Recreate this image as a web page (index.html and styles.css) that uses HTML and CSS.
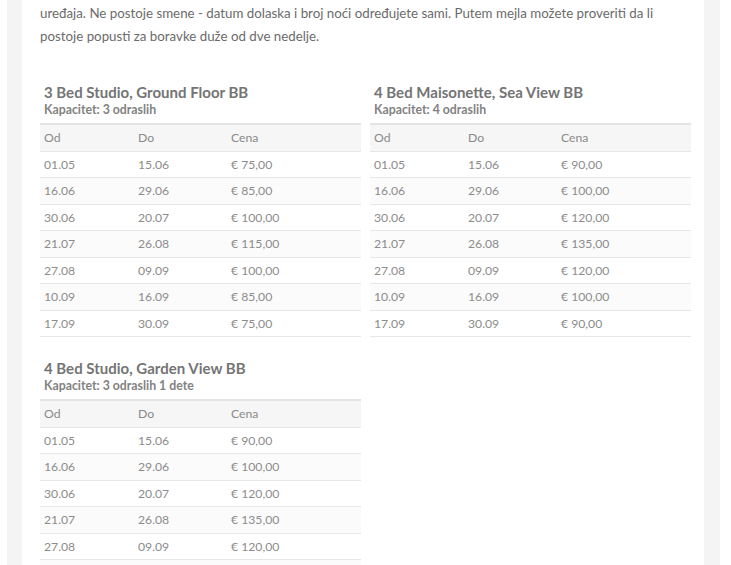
FILE: index.html
```html
<!DOCTYPE html>
<html lang="sr">
<head>
<meta charset="utf-8">
<title>Cenovnik</title>
<link rel="stylesheet" href="styles.css">
</head>
<body>
<div class="site">
  <div class="frame">
    <div class="content">
      <p class="intro">Svi apartmani su klimatizovani i imaju kuhinju opremljenu posuđem i osnovnim setom kuhinjskih<br>uređaja. Ne postoje smene - datum dolaska i broj noći određujete sami. Putem mejla možete proveriti da li postoje popusti za boravke duže od dve nedelje.</p>

      <div class="grid">
        <section class="unit">
          <h3 class="unit-title">3 Bed Studio, Ground Floor BB</h3>
          <p class="unit-cap">Kapacitet: 3 odraslih</p>
          <table class="prices">
            <thead><tr><th>Od</th><th>Do</th><th>Cena</th></tr></thead>
            <tbody>
              <tr><td>01.05</td><td>15.06</td><td>€ 75,00</td></tr>
              <tr><td>16.06</td><td>29.06</td><td>€ 85,00</td></tr>
              <tr><td>30.06</td><td>20.07</td><td>€ 100,00</td></tr>
              <tr><td>21.07</td><td>26.08</td><td>€ 115,00</td></tr>
              <tr><td>27.08</td><td>09.09</td><td>€ 100,00</td></tr>
              <tr><td>10.09</td><td>16.09</td><td>€ 85,00</td></tr>
              <tr><td>17.09</td><td>30.09</td><td>€ 75,00</td></tr>
            </tbody>
          </table>
        </section>

        <section class="unit">
          <h3 class="unit-title">4 Bed Maisonette, Sea View BB</h3>
          <p class="unit-cap">Kapacitet: 4 odraslih</p>
          <table class="prices">
            <thead><tr><th>Od</th><th>Do</th><th>Cena</th></tr></thead>
            <tbody>
              <tr><td>01.05</td><td>15.06</td><td>€ 90,00</td></tr>
              <tr><td>16.06</td><td>29.06</td><td>€ 100,00</td></tr>
              <tr><td>30.06</td><td>20.07</td><td>€ 120,00</td></tr>
              <tr><td>21.07</td><td>26.08</td><td>€ 135,00</td></tr>
              <tr><td>27.08</td><td>09.09</td><td>€ 120,00</td></tr>
              <tr><td>10.09</td><td>16.09</td><td>€ 100,00</td></tr>
              <tr><td>17.09</td><td>30.09</td><td>€ 90,00</td></tr>
            </tbody>
          </table>
        </section>

        <section class="unit">
          <h3 class="unit-title">4 Bed Studio, Garden View BB</h3>
          <p class="unit-cap">Kapacitet: 3 odraslih 1 dete</p>
          <table class="prices">
            <thead><tr><th>Od</th><th>Do</th><th>Cena</th></tr></thead>
            <tbody>
              <tr><td>01.05</td><td>15.06</td><td>€ 90,00</td></tr>
              <tr><td>16.06</td><td>29.06</td><td>€ 100,00</td></tr>
              <tr><td>30.06</td><td>20.07</td><td>€ 120,00</td></tr>
              <tr><td>21.07</td><td>26.08</td><td>€ 135,00</td></tr>
              <tr><td>27.08</td><td>09.09</td><td>€ 120,00</td></tr>
              <tr><td>10.09</td><td>16.09</td><td>€ 100,00</td></tr>
              <tr><td>17.09</td><td>30.09</td><td>€ 90,00</td></tr>
            </tbody>
          </table>
        </section>
      </div>
    </div>
  </div>
</div>
</body>
</html>
```

FILE: styles.css
```css
html, body {
  margin: 0;
  padding: 0;
  background: #ffffff;
  font-family: Lato, "Open Sans", "Liberation Sans", sans-serif;
  color: #6a6a6a;
  overflow: hidden;
}

.site {
  padding: 0 11px 0 7px;
}

.frame {
  border-left: 15px solid #f4f4f4;
  border-right: 16px solid #f4f4f4;
  min-height: 600px;
}

.content {
  padding: 0 0 0 18px;
  margin-top: -21px;
}

.intro {
  margin: 0;
  width: 632px;
  font-size: 13.3px;
  line-height: 23px;
  color: #6b6b6b;
}

.grid {
  display: grid;
  grid-template-columns: 321px 321px;
  column-gap: 9px;
  row-gap: 22px;
  margin-top: 35px;
  align-items: start;
}

.unit-title {
  margin: 0 0 0 4px;
  font-size: 15px;
  line-height: 19px;
  font-weight: 700;
  color: #747474;
}

.unit-cap {
  margin: 0 0 6px 4px;
  font-size: 12.3px;
  line-height: 15px;
  font-weight: 700;
  color: #828282;
}

.prices {
  width: 100%;
  border-collapse: collapse;
  border-top: 2px solid #e4e4e4;
  font-size: 12.2px;
  color: #8c8c8c;
}

.prices th,
.prices td {
  text-align: left;
  padding: 0 4px;
  height: 25.5px;
  border-bottom: 1px solid #e6e6e6;
  font-weight: 400;
}

.prices th {
  background: #f6f6f6;
  color: #8a8a8a;
}

.prices th:nth-child(1) {
  width: 86px;
}

.prices th:nth-child(2) {
  width: 85px;
}

.prices tbody tr:nth-child(even) td {
  background: #fbfbfb;
}
```
